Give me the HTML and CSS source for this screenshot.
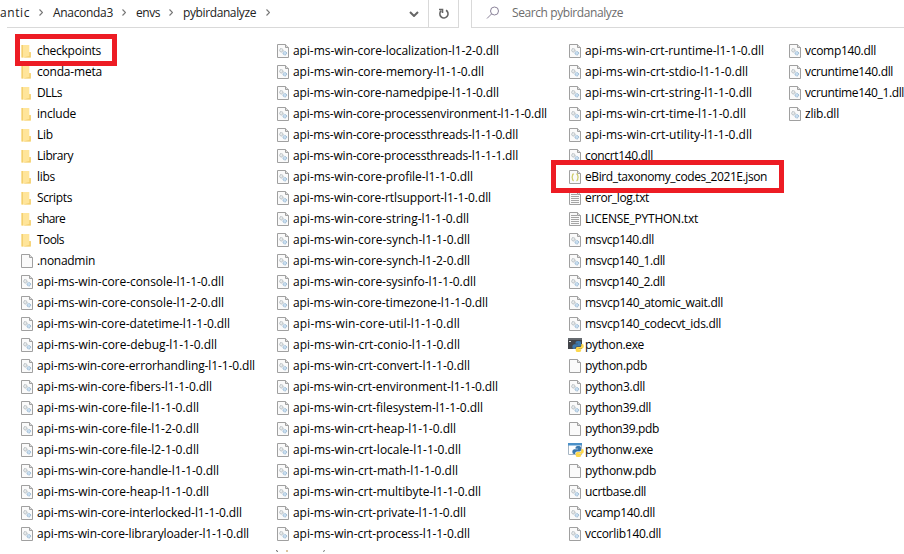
FILE: index.html
```
<!DOCTYPE html>
<html lang="en">
<head>
<meta charset="utf-8">
<title>pybirdanalyze</title>
<link rel="stylesheet" href="styles.css">
</head>
<body>
<svg class="defs" aria-hidden="true">
  <symbol id="folder" viewBox="0 0 16 16"><path fill="#ffe59a" d="M1.500 2H9.300v7l1.500 1v4.500H1.500z"/><path fill="#f3cf70" d="M1.500 2h1.500v12.500H1.500zM9.300 9h1.500v5.500H3l6.300-1.500z"/></symbol>
  <symbol id="blank" viewBox="0 0 16 16"><path fill="#fafafa" stroke="#a0a0a0" d="M1.500 1.500h8l3 3v10h-11z"/><path fill="#ddd" stroke="#a0a0a0" d="M9.500 1.500v3h3"/></symbol>
  <symbol id="dll" viewBox="0 0 16 16"><use href="#blank"/><circle cx="5.300" cy="7.300" r="1.700" fill="#e7eaeb" stroke="#a3acb1" stroke-dasharray="1 .5"/><circle cx="8.800" cy="10.200" r="1.800" fill="#c8def0" stroke="#8fb0cc" stroke-dasharray="1 .5"/></symbol>
  <symbol id="txt" viewBox="0 0 16 16"><use href="#blank"/><path stroke="#a5a5a5" d="M3 4.500h6M3 6.500h8M3 8.500h8M3 10.500h8M3 12.500h8"/></symbol>
  <symbol id="json" viewBox="0 0 16 16"><use href="#blank"/><path fill="none" stroke="#cfcd6c" stroke-width="1.300" d="M5.800 5q-1.300 0-1.300 1.500T3.700 8.200q.8.200.8 1.800t1.300 1.500M8.400 5q1.300 0 1.300 1.500t.8 1.700q-.8.200-.8 1.800t-1.300 1.500"/></symbol>
  <symbol id="snake" viewBox="0 0 16 16"><path fill="#3c78ad" d="M7.500 5.500q0-1.500 2-1.500h1.800q1.700 0 1.700 1.600V8q0 1.500-1.500 1.500H9Q7.300 9.500 7.300 11v1H6q-1.700 0-1.700-2.300T6.200 7.200h3.800v-.5H7.500z"/><path fill="#fdd84c" d="M13.300 7h1q1.500 0 1.500 2.300t-1.800 2.500h-3.500v.5h2.700v1.200q0 1.500-2.200 1.500h-1.300q-2 0-2-1.500v-1.800Q7.700 10 9.300 10h2.500q1.500 0 1.500-1.500z"/></symbol>
  <symbol id="exe" viewBox="0 0 16 16"><path fill="#414449" d="M0 1h14v11H0z"/><path fill="#65696e" d="M0 1h14v2H0z"/><path stroke="#ddd" d="M1 4.500h2"/><use href="#snake"/></symbol>
  <symbol id="exew" viewBox="0 0 16 16"><path fill="#fff" stroke="#a7b6c4" d="M.5 1.500h13v11H.5z"/><path fill="#4b90c8" d="M0 1h14v2.500H0z"/><use href="#snake"/></symbol>
</svg>

<header class="toolbar">
  <nav class="address">
    <ol class="crumbs" id="crumbs"></ol>
    <svg class="drop" viewBox="0 0 10 6"><path d="M1 1l4 4 4-4"/></svg>
  </nav>
  <button class="refresh" aria-label="Refresh"><svg viewBox="0 0 12 12"><path d="M8 2.300A4.100 4.100 0 1 1 3.300 2.700"/><path d="M1 1.500h3.500v3.500"/></svg></button>
  <div class="search">
    <svg viewBox="0 0 14 14"><circle cx="8.500" cy="5" r="4"/><path d="M5.700 7.800L1 12.500"/></svg>
    <span class="label" data-width="111">Search pybirdanalyze</span>
  </div>
</header>
<main class="files" id="files"></main>
<svg class="next" viewBox="0 0 50 2" aria-hidden="true"><path stroke="#555" d="M.5 0l1 2"/><path stroke="#b88940" d="M11 0v2"/><path stroke="#777" d="M48.500 0l-1 2"/></svg>
<script src="files.js"></script>
</body>
</html>
```
FILE: styles.css
```
* { box-sizing: border-box; }
body {
  margin: 0;
  width: 904px;
  height: 554px;
  overflow: hidden;
  background: #fff;
  color: #000;
  font: 12px/21px "Open Sans", "Noto Sans", sans-serif;
}
.defs { position: absolute; width: 0; height: 0; }
.toolbar { display: flex; height: 28px; padding-left: 7px; }
.address {
  display: flex;
  align-items: center;
  justify-content: space-between;
  width: 421px;
  padding-right: 9px;
  border-bottom: 1px solid #d9d9d9;
}
.crumbs { display: flex; margin: 0 0 0 -7px; padding: 0 0 2px; list-style: none; color: #222; }
.crumb { display: flex; align-items: center; height: 25px; }
.crumb .label { flex: none; }
.sep { width: 4px; height: 7px; fill: none; stroke: #777; stroke-width: 1.2; flex: none; }
.drop { width: 10px; height: 6px; fill: none; stroke: #666; stroke-width: 2; }
.refresh {
  display: flex;
  align-items: center;
  justify-content: center;
  width: 31px;
  padding: 0;
  border: solid #d9d9d9;
  border-width: 0 1px 1px;
  background: #fff;
}
.refresh svg { width: 12px; height: 12px; fill: none; stroke: #666; stroke-width: 1.6; }
.search {
  display: flex;
  align-items: center;
  gap: 12px;
  flex: 1;
  margin-left: 12px;
  padding: 0 0 2px 14px;
  border: solid #d9d9d9;
  border-width: 0 0 1px 1px;
  color: #6d6d6d;
}
.search svg { width: 14px; height: 14px; fill: none; stroke: #8a8299; }
.files { display: grid; grid-template-columns: 256px 292px 220px auto; padding: 12px 0 0 20px; height: 516px; }
.column { margin: 0; padding: 0; list-style: none; }
.file { position: relative; display: flex; align-items: center; gap: 1px; height: 21px; }
.icon { width: 16px; height: 16px; flex: none; }
.label { white-space: pre; }
.marked::after {
  content: "";
  box-sizing: border-box;
  position: absolute;
  z-index: 1;
  border: 5px solid #ed1c24;
}
.mark-folder::after { left: -5px; top: -6px; width: 102px; height: 32px; }
.mark-file::after { left: -17px; top: -6px; width: 233px; height: 33px; }
.next { display: block; width: 50px; height: 2px; margin: 6px 0 0 276px; fill: none; }
```
FILE: files.js
```
// Each entry: icon | name | label width in px
const core = (name, width) => `dll|api-ms-win-core-${name}.dll|${width}`;
const crt = (name, width) => `dll|api-ms-win-crt-${name}-l1-1-0.dll|${width}`;
const columns = [
  ["folder|checkpoints|64", "folder|conda-meta|65", "folder|DLLs|25", "folder|include|39", "folder|Lib|16",
   "folder|Library|36", "folder|libs|18", "folder|Scripts|35", "folder|share|28", "folder|Tools|27", "blank|.nonadmin|58",
   core("console-l1-1-0", 187), core("console-l1-2-0", 187), core("datetime-l1-1-0", 193), core("debug-l1-1-0", 180),
   core("errorhandling-l1-1-0", 218), core("fibers-l1-1-0", 175), core("file-l1-1-0", 162), core("file-l1-2-0", 162),
   core("file-l2-1-0", 162), core("handle-l1-1-0", 182), core("heap-l1-1-0", 172), core("interlocked-l1-1-0", 205),
   core("libraryloader-l1-1-0", 212)],
  [core("localization-l1-2-0", 206), core("memory-l1-1-0", 191), core("namedpipe-l1-1-0", 206),
   core("processenvironment-l1-1-0", 254), core("processthreads-l1-1-0", 225), core("processthreads-l1-1-1", 225),
   core("profile-l1-1-0", 180), core("rtlsupport-l1-1-0", 198), core("string-l1-1-0", 176), core("synch-l1-1-0", 177),
   core("synch-l1-2-0", 177), core("sysinfo-l1-1-0", 183), core("timezone-l1-1-0", 195), core("util-l1-1-0", 167),
   crt("conio", 167), crt("convert", 177), crt("environment", 205), crt("filesystem", 190), crt("heap", 163),
   crt("locale", 168), crt("math", 165), crt("multibyte", 188), crt("private", 173), crt("process", 177)],
  [crt("runtime", 179), crt("stdio", 163), crt("string", 167), crt("time", 161), crt("utility", 167),
   "dll|concrt140.dll|68", "json|eBird_taxonomy_codes_2021E.json|182", "txt|error_log.txt|64", "txt|LICENSE_PYTHON.txt|113",
   "dll|msvcp140.dll|69", "dll|msvcp140_1.dll|80", "dll|msvcp140_2.dll|80", "dll|msvcp140_atomic_wait.dll|138",
   "dll|msvcp140_codecvt_ids.dll|136", "exe|python.exe|59", "blank|python.pdb|62", "dll|python3.dll|60",
   "dll|python39.dll|66", "blank|python39.pdb|74", "exew|pythonw.exe|68", "blank|pythonw.pdb|71",
   "dll|ucrtbase.dll|61", "dll|vcamp140.dll|70", "dll|vccorlib140.dll|76"],
  ["dll|vcomp140.dll|71", "dll|vcruntime140.dll|88", "dll|vcruntime140_1.dll|99", "dll|zlib.dll|34"]
];
const marks = { "checkpoints": "marked mark-folder", "eBird_taxonomy_codes_2021E.json": "marked mark-file" };

document.getElementById("files").innerHTML = columns.map(list =>
  `<ul class="column">${list.map(entry => {
    const [icon, name, width] = entry.split("|");
    return `<li class="file ${marks[name] || ""}"><svg class="icon"><use href="#${icon}"/></svg><span class="label" data-width="${width}">${name}</span></li>`;
  }).join("")}</ul>`).join("");

// Crumbs: name, label width, gap before and after the separator
document.getElementById("crumbs").innerHTML = [["antic", 30, 9, 10], ["Anaconda3", 60, 9, 10], ["envs", 24, 9, 10], ["pybirdanalyze", 73, 10, 0]]
  .map(([name, width, before, after]) =>
    `<li class="crumb"><span class="label" data-width="${width}">${name}</span><svg class="sep" viewBox="0 0 4 7" style="margin:0 ${after}px 0 ${before}px"><path d="M.5 .5l3 3-3 3"/></svg></li>`).join("");

for (const label of document.querySelectorAll("[data-width]")) {
  const natural = label.getBoundingClientRect().width;
  label.style.letterSpacing = (label.dataset.width - natural) / label.textContent.length + "px";
}
```
